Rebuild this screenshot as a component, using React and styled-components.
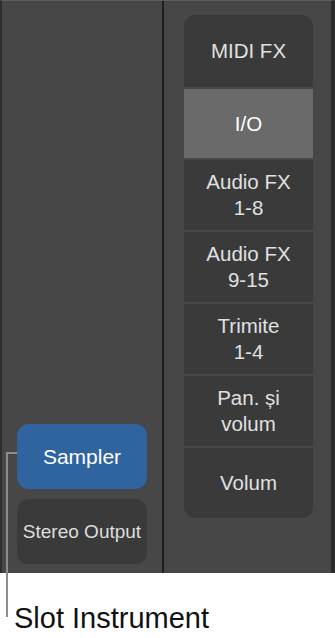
import React from 'react';
import styled, { createGlobalStyle } from 'styled-components';

const GlobalStyle = createGlobalStyle`
  html, body {
    margin: 0;
    padding: 0;
    background: #ffffff;
  }
  body {
    font-family: "Liberation Sans", Arial, sans-serif;
  }
`;

const Page = styled.div`
  position: relative;
  width: 335px;
  height: 638px;
  overflow: hidden;
  background: #ffffff;
`;

const Panel = styled.div`
  box-sizing: border-box;
  height: 573px;
  display: grid;
  grid-template-columns: 160px 2px 1fr;
  background: #474747;
  border-top: 1px solid #5c5c5c;
  border-left: 2px solid #2e2e2e;
  border-right: 4px solid #2b2b2b;
`;

const LeftColumn = styled.div`
  display: flex;
  flex-direction: column;
  justify-content: flex-end;
  gap: 10px;
  padding: 0 0 9px 15px;
`;

const Divider = styled.div`
  background: #1e1e1e;
`;

const RightColumn = styled.div`
  padding: 14px 0 0 20px;
`;

const SlotButton = styled.div`
  width: 130px;
  height: 65px;
  border-radius: 12px;
  display: flex;
  align-items: center;
  justify-content: center;
  background: ${(p) => (p.$active ? '#2f649f' : '#3a3a3a')};
  color: ${(p) => (p.$active ? '#ffffff' : '#dedede')};
  font-size: ${(p) => (p.$small ? '19px' : '21px')};
`;

const Card = styled.div`
  width: 129px;
  display: flex;
  flex-direction: column;
  gap: 2px;
  border-radius: 11px;
  overflow: hidden;
`;

const Cell = styled.div`
  height: ${(p) => p.$h || 70}px;
  display: flex;
  align-items: center;
  justify-content: center;
  text-align: center;
  background: ${(p) => (p.$selected ? '#6a6a6a' : '#3a3a3a')};
  color: ${(p) => (p.$selected ? '#ffffff' : '#e0e0e0')};
  font-size: 20.5px;
  line-height: 26px;
`;

const Callout = styled.div`
  position: absolute;
  left: 6px;
  top: 452px;
  width: 11px;
  height: 165px;
  border-left: 2px solid #8c8c8c;
  border-top: 2px solid #8c8c8c;
  box-sizing: border-box;
`;

const Label = styled.div`
  margin: 31px 0 0 14px;
  font-size: 29px;
  line-height: 28px;
  color: #111111;
`;

const cells = [
  { text: 'MIDI FX', h: 72 },
  { text: 'I/O', selected: true, h: 69 },
  { text: 'Audio FX\n1-8' },
  { text: 'Audio FX\n9-15' },
  { text: 'Trimite\n1-4' },
  { text: 'Pan. și\nvolum' },
  { text: 'Volum' },
];

export default function App() {
  return (
    <Page>
      <GlobalStyle />
      <Panel>
        <LeftColumn>
          <SlotButton $active>Sampler</SlotButton>
          <SlotButton $small>Stereo Output</SlotButton>
        </LeftColumn>
        <Divider />
        <RightColumn>
          <Card>
            {cells.map((c) => (
              <Cell key={c.text} $selected={c.selected} $h={c.h}>
                <span>
                  {c.text.split('\n').map((line, i) => (
                    <React.Fragment key={i}>
                      {i > 0 && <br />}
                      {line}
                    </React.Fragment>
                  ))}
                </span>
              </Cell>
            ))}
          </Card>
        </RightColumn>
      </Panel>
      <Callout />
      <Label>Slot Instrument</Label>
    </Page>
  );
}
